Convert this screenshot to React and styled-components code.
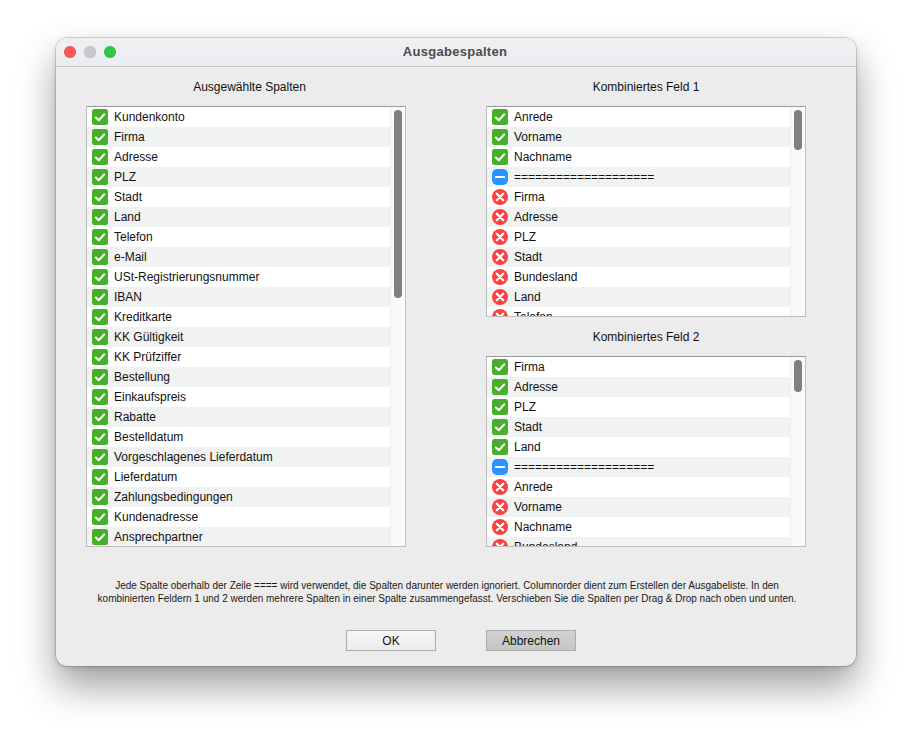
import React from "react";
import styled, { createGlobalStyle } from "styled-components";

const Global = createGlobalStyle`
  html, body { margin: 0; padding: 0; background: #fff; }
  body { font-family: "Liberation Sans", Arial, sans-serif; }
`;

const Page = styled.div`
  width: 912px;
  height: 740px;
  padding: 38px 56px 74px;
  box-sizing: border-box;
  overflow: hidden;
`;

const Window = styled.div`
  width: 800px;
  height: 628px;
  background: #ececec;
  border-radius: 11px;
  box-shadow: 0 0 0 0.5px rgba(0, 0, 0, 0.28), 0 20px 38px rgba(0, 0, 0, 0.38), 0 2px 6px rgba(0, 0, 0, 0.12);
  display: flex;
  flex-direction: column;
  overflow: hidden;
`;

const TitleBar = styled.div`
  height: 29px;
  flex: none;
  box-sizing: border-box;
  display: grid;
  grid-template-columns: 1fr auto 1fr;
  align-items: center;
  padding: 0 8px;
  background: linear-gradient(#f0f0f4, #ecedf1);
  border-bottom: 1px solid #c4c4c4;
`;

const Lights = styled.div`
  display: flex;
  gap: 8px;
`;

const Light = styled.span`
  width: 12px;
  height: 12px;
  border-radius: 50%;
  background: ${(p) => p.$color};
  box-shadow: inset 0 0 0 0.5px rgba(0, 0, 0, 0.12);
`;

const Title = styled.div`
  font-size: 13px;
  line-height: 15px;
  font-weight: 700;
  color: #4b4b4b;
  letter-spacing: 0.28px;
  margin: -2px 2px 0 0;
`;

const Content = styled.div`
  display: grid;
  grid-template-columns: 320px 320px;
  column-gap: 80px;
  padding: 0 30px;
  height: 480px;
  flex: none;
`;

const Column = styled.div`
  display: flex;
  flex-direction: column;
`;

const Heading = styled.div`
  font-size: 12px;
  line-height: 14px;
  color: #111;
  text-align: center;
  padding: 13px 0 12px;
  margin-left: ${(p) => p.$shift || 0}px;
`;

const List = styled.div`
  height: ${(p) => p.$height}px;
  box-sizing: border-box;
  background: #fff;
  border: 1px solid;
  border-color: #9a9a9a #c0c0c0 #bdbdbd #bdbdbd;
  display: flex;
  overflow: hidden;
`;

const Rows = styled.div`
  flex: 1;
  min-width: 0;
  overflow: hidden;
`;

const Row = styled.div`
  height: 20px;
  display: flex;
  align-items: center;
  padding-left: 5px;
  gap: 6px;
  font-size: 12px;
  color: #111;
  background: ${(p) => (p.$odd ? "#f1f3f2" : "#fff")};
`;

const Gutter = styled.div`
  width: 15px;
  flex: none;
  box-sizing: border-box;
  padding: 3px 3px 0;
  background: #fafafa;
  border-left: 1px solid #ededed;
`;

const Thumb = styled.div`
  width: 8px;
  height: ${(p) => p.$height}px;
  border-radius: 4px;
  background: #7f7f7f;
`;

const IconBox = styled.svg`
  width: 16px;
  height: 16px;
  flex: none;
  display: block;
`;

const Check = () => (
  <IconBox viewBox="0 0 16 16">
    <rect width="16" height="16" rx="2.5" fill="#48ae2d" />
    <path d="M3.8 8.5 6.8 11.2 12.2 5.4" fill="none" stroke="#fff" strokeWidth="2" strokeLinecap="round" strokeLinejoin="round" />
  </IconBox>
);

const Minus = () => (
  <IconBox viewBox="0 0 16 16">
    <rect width="16" height="16" rx="5" fill="#2a93ff" />
    <path d="M3.8 8h8.4" stroke="#fff" strokeWidth="2.2" strokeLinecap="round" />
  </IconBox>
);

const Cross = () => (
  <IconBox viewBox="0 0 16 16">
    <circle cx="8" cy="8" r="8" fill="#fa4140" />
    <path d="M4.8 4.8l6.4 6.4M11.2 4.8l-6.4 6.4" stroke="#fff" strokeWidth="2.3" strokeLinecap="round" />
  </IconBox>
);

const icons = { c: Check, m: Minus, x: Cross };

const Help = styled.div`
  width: 720px;
  margin: 32px 0 0 31px;
  font-size: 10px;
  line-height: 13px;
  color: #1a1a1a;
  text-align: center;
`;

const Buttons = styled.div`
  display: flex;
  justify-content: center;
  gap: 50px;
  margin-top: 25px;
  padding-left: 10px;
`;

const Button = styled.div`
  width: 90px;
  height: 21px;
  box-sizing: border-box;
  border: 1px solid #ababab;
  background: ${(p) => (p.$secondary ? "linear-gradient(#d2d2d2, #c6c6c6)" : "linear-gradient(#f6f6f6, #ebebeb)")};
  font-size: 12px;
  color: #111;
  display: flex;
  align-items: center;
  justify-content: center;
`;

const mainRows = ["Kundenkonto","Firma","Adresse","PLZ","Stadt","Land","Telefon","e-Mail","USt-Registrierungsnummer","IBAN","Kreditkarte","KK Gültigkeit","KK Prüfziffer","Bestellung","Einkaufspreis","Rabatte","Bestelldatum","Vorgeschlagenes Lieferdatum","Lieferdatum","Zahlungsbedingungen","Kundenadresse","Ansprechpartner"].map((t) => ["c", t]);
const sep = "====================";
const field1 = [["c","Anrede"],["c","Vorname"],["c","Nachname"],["m",sep],["x","Firma"],["x","Adresse"],["x","PLZ"],["x","Stadt"],["x","Bundesland"],["x","Land"],["x","Telefon"]];
const field2 = [["c","Firma"],["c","Adresse"],["c","PLZ"],["c","Stadt"],["c","Land"],["m",sep],["x","Anrede"],["x","Vorname"],["x","Nachname"],["x","Bundesland"]];

const ListBox = ({ rows, height, thumb }) => (
  <List $height={height}>
    <Rows>
      {rows.map(([k, t], i) => {
        const I = icons[k];
        return (
          <Row key={i} $odd={i % 2 === 1}>
            <I />
            <span>{t}</span>
          </Row>
        );
      })}
    </Rows>
    <Gutter>
      <Thumb $height={thumb} />
    </Gutter>
  </List>
);

export default function App() {
  return (
    <Page>
      <Global />
      <Window>
        <TitleBar>
          <Lights>
            <Light $color="#fc5753" />
            <Light $color="#c9c9cc" />
            <Light $color="#33c748" />
          </Lights>
          <Title>Ausgabespalten</Title>
          <span />
        </TitleBar>
        <Content>
          <Column>
            <Heading $shift={7}>Ausgewählte Spalten</Heading>
            <ListBox rows={mainRows} height={441} thumb={188} />
          </Column>
          <Column>
            <Heading>Kombiniertes Feld 1</Heading>
            <ListBox rows={field1} height={211} thumb={40} />
            <Heading>Kombiniertes Feld 2</Heading>
            <ListBox rows={field2} height={191} thumb={32} />
          </Column>
        </Content>
        <Help>
          Jede Spalte oberhalb der Zeile ==== wird verwendet, die Spalten darunter werden ignoriert. Columnorder dient zum Erstellen der Ausgabeliste. In den
          <br />
          kombinierten Feldern 1 und 2 werden mehrere Spalten in einer Spalte zusammengefasst. Verschieben Sie die Spalten per Drag &amp; Drop nach oben und unten.
        </Help>
        <Buttons>
          <Button>OK</Button>
          <Button $secondary>Abbrechen</Button>
        </Buttons>
      </Window>
    </Page>
  );
}
